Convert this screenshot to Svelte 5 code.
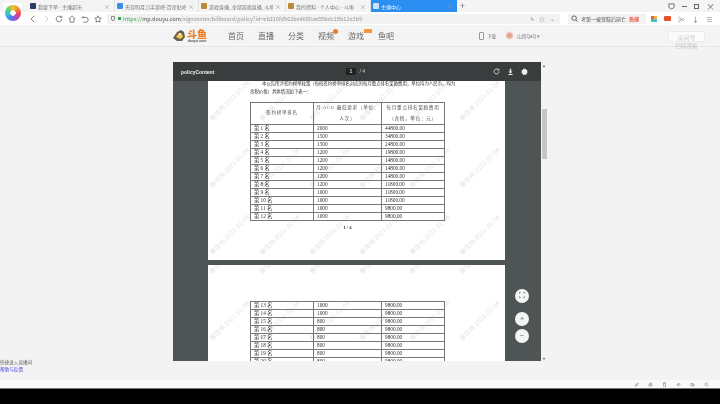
<script>
  const tabs = [
    { title: "我要下单 - 主播超市", color: "#2b3a67", width: 87 },
    { title: "天涯明月刀手游吧-百度贴吧--", color: "#3b8ee8", width: 84 },
    { title: "游戏直播_全部游戏直播_斗鱼区", color: "#b98a3a", width: 87 },
    { title: "我的资料 - 个人中心 - 斗鱼", color: "#b98a3a", width: 85 },
  ];
  const nav = [
    { label: "首页" },
    { label: "直播" },
    { label: "分类" },
    { label: "视频", badge: "dot" },
    { label: "游戏", badge: "tag" },
    { label: "鱼吧" },
  ];
  const firstRows = [
    [1, 2000, "44800.00"], [2, 1500, "34800.00"], [3, 1500, "24800.00"], [4, 1200, "19800.00"],
    [5, 1200, "14800.00"], [6, 1200, "14800.00"], [7, 1200, "14800.00"], [8, 1200, "11800.00"],
    [9, 1000, "11800.00"], [10, 1000, "11800.00"], [11, 1000, "9800.00"], [12, 1000, "9800.00"],
  ];
  const secondRows = [
    [13, 1000, "9800.00"], [14, 1000, "9800.00"], [15, 800, "9800.00"], [16, 800, "9800.00"],
    [17, 800, "9800.00"], [18, 800, "9800.00"], [19, 800, "9800.00"], [20, 800, "9800.00"],
  ];
  const marks = Array.from({ length: 18 });
  const statusIcons = [
    "M2 8l2-1 4-5 1 1-5 4-1 2zM2 4h2M6 8V6",
    "M2 4l3-2 3 1v5H2zM5 2v4H2",
    "M3 2h4v7H3zM2 2h6",
    "M2 4h2l2-2v6L4 6H2zM8 4v2",
    "M2 3h4v5H2zM6 4h2v4H6",
    "M4.5 2a2.7 2.7 0 1 1 0 5.4 2.7 2.7 0 0 1 0-5.4zM6.5 7 8.5 9",
  ];
</script>

<div class="screen">
  <div class="browser">
    <div class="logo-box"><div class="logo-ball"></div></div>
    <div class="chrome">
      <div class="tabbar">
        {#each tabs as tab}
          <div class="tab" style="width: {tab.width}px">
            <span class="favicon" style="background: {tab.color}"></span>
            <span class="tab-title">{tab.title}</span>
            <span class="tab-close">×</span>
          </div>
        {/each}
        <div class="tab active">
          <span class="favicon light"></span>
          <span class="tab-title">主播中心</span>
          <span class="tab-close">×</span>
        </div>
        <span class="plus">+</span>
        <div class="win-controls">
          <svg width="7" height="7" viewBox="0 0 8 8"><path d="M1 1h6v4l-3 2-3-2z" fill="none" stroke="#666" /></svg>
          <span class="win-min"></span>
          <span class="win-max"></span>
          <span class="win-x">×</span>
        </div>
      </div>
      <div class="toolbar">
        <svg class="tool" viewBox="0 0 10 10"><path d="M6.5 1 2.5 5l4 4" /></svg>
        <svg class="tool faint" viewBox="0 0 10 10"><path d="M3.5 1l4 4-4 4" /></svg>
        <svg class="tool" viewBox="0 0 10 10"><path d="M8.5 5a3.5 3.5 0 1 1-1-2.5M8.5 1v2h-2" /></svg>
        <svg class="tool" viewBox="0 0 10 10"><path d="M1 5l4-4 4 4M2.5 4v5h5V4" /></svg>
        <svg class="tool" viewBox="0 0 10 10"><path d="M3 1.5 1.5 3 3 4.5M1.5 3H6a2.7 2.7 0 0 1 0 6H3" /></svg>
        <svg class="tool" viewBox="0 0 10 10"><path d="M5 1l1.2 2.6L9 4 7 6l.5 3L5 7.6 2.5 9 3 6 1 4l2.8-.4z" /></svg>
        <div class="urlbar">
          <span class="shield"></span>
          <span class="lock"></span>
          <span class="url"><span class="https">https://</span><span class="host">mp.douyu.com</span>/signcenter/billboard/policy?id=eb216fd962be4680ae88bdc18b12e3b9</span>
          <span class="url-icons">
            <span class="bolt">ϟ</span>
            <span class="star">☆</span>
            <span class="chev">⌄</span>
          </span>
        </div>
        <div class="searchbar">
          <svg width="7" height="7" viewBox="0 0 10 10"><circle cx="4.5" cy="4.5" r="3.2" fill="none" stroke="#555" stroke-width="1.3" /><path d="M7 7l2.4 2.4" stroke="#555" stroke-width="1.3" /></svg>
          <span class="search-text">考第一被贤糕后崩亡</span>
          <span class="hot">热搜</span>
        </div>
        <div class="ext">
          <span class="ext-grid"></span>
          <span class="ext-red"></span>
          <span class="ext-glyph">✂</span>
          <span class="ext-glyph">↓</span>
          <span class="ext-glyph">≡</span>
        </div>
      </div>

      <header class="site-header">
        <div class="brand">
          <svg width="15" height="14" viewBox="0 0 15 14">
            <path d="M1 9 5 3l4-2 3 2 1 5-3 4H5z" fill="#6a6045" />
            <path d="M4 8l3-4 3 1 1 3-3 2z" fill="#f2c75c" />
            <circle cx="8" cy="5" r="1" fill="#fff" />
          </svg>
          <div class="brand-text">
            <span class="brand-name">斗鱼</span>
            <span class="brand-url">douyu.com</span>
          </div>
        </div>
        <nav class="site-nav">
          {#each nav as item}
            <span class="nav-item">
              {item.label}
              {#if item.badge === "dot"}<i class="nav-dot"></i>{/if}
              {#if item.badge === "tag"}<i class="nav-tag"></i>{/if}
            </span>
          {/each}
        </nav>
        <div class="site-user">
          <span class="phone"></span>
          <span class="user-label">下载</span>
          <span class="avatar"></span>
          <span class="user-label">山哥QaQ ▾</span>
        </div>
        <div class="room-box">
          <span class="room-btn">房间号</span>
          <span class="room-note">扫码观看</span>
        </div>
      </header>

      <div class="content">
        <div class="viewer-row">
          <section class="viewer">
            <div class="viewer-head">
              <span class="doc-name">policyContent</span>
              <span class="pager"><b>1</b> / 4</span>
              <span class="head-icons">
                <svg width="7" height="7" viewBox="0 0 10 10"><path d="M8.5 5a3.5 3.5 0 1 1-1-2.5M8.5 1v2h-2" fill="none" stroke="#ddd" stroke-width="1.3" /></svg>
                <svg width="7" height="7" viewBox="0 0 10 10"><path d="M4 1h2v4h2L5 8 2 5h2zM2 8.5h6V10H2z" fill="#eee" /></svg>
                <svg width="7" height="7" viewBox="0 0 10 10"><path d="M3 1h4v2h2v5H7.5V9.5h-5V8H1V3h2z" fill="#eee" /></svg>
              </span>
            </div>
            <div class="viewer-body">
              <div class="page first">
                <div class="marks first-marks">
                  {#each marks as _}<span class="mark">秦佳伟 2021-01-04</span>{/each}
                </div>
                <p class="intro indent">本公告所涉签约榜单政策（每档签约榜单排名对应的每月重点排名奖励费用，单位均为人民币，均为</p>
                <p class="intro">含税价格）具体情况如下表一：</p>
                <table>
                  <colgroup><col class="c1" /><col class="c2" /><col class="c3" /></colgroup>
                  <thead>
                    <tr>
                      <th>签约榜单排名</th>
                      <th>月 ACU 最低要求（单位：<br />人次）</th>
                      <th>每月重点排名奖励费用<br />（含税，单位：元）</th>
                    </tr>
                  </thead>
                  <tbody>
                    {#each firstRows as row}
                      <tr><td>第 {row[0]} 名</td><td>{row[1]}</td><td>{row[2]}</td></tr>
                    {/each}
                  </tbody>
                </table>
                <div class="page-no">1 / 4</div>
              </div>
              <div class="page second">
                <div class="marks second-marks">
                  {#each marks as _}<span class="mark">秦佳伟 2021-01-04</span>{/each}
                </div>
                <table>
                  <colgroup><col class="c1" /><col class="c2" /><col class="c3" /></colgroup>
                  <tbody>
                    {#each secondRows as row}
                      <tr><td>第 {row[0]} 名</td><td>{row[1]}</td><td>{row[2]}</td></tr>
                    {/each}
                  </tbody>
                </table>
              </div>
            </div>
            <div class="float-btns">
              <button class="round fit" aria-label="fit">
                <svg width="6" height="6" viewBox="0 0 6 6"><path d="M0 2V0h2M4 0h2v2M6 4v2H4M2 6H0V4" fill="none" stroke="#777" /></svg>
              </button>
              <button class="round">+</button>
              <button class="round">−</button>
            </div>
          </section>
          <div class="scrollbar">
            <span class="arrow">▴</span>
            <span class="thumb"></span>
            <span class="arrow down">▾</span>
          </div>
        </div>
        <div class="foot-links">
          <span>快捷进入直播间</span>
          <a href="#help">帮助与反馈</a>
        </div>
      </div>

      <div class="statusbar">
        {#each statusIcons as d}
          <svg width="5" height="5" viewBox="0 0 10 10"><path {d} fill="none" stroke="#888" stroke-width="1.2" /></svg>
        {/each}
      </div>
    </div>
  </div>
  <div class="taskbar"></div>
</div>

<style>
  :global(body) {
    margin: 0;
    background: #000;
  }

  .screen {
    width: 720px;
    height: 404px;
    display: flex;
    flex-direction: column;
    overflow: hidden;
    font-family: "Noto Sans CJK SC", "Liberation Sans", sans-serif;
    filter: blur(0.5px);
  }

  .browser {
    position: relative;
    height: 388px;
    background: #f3f3f3;
    border-bottom: 1px solid #777;
  }

  .chrome {
    display: flex;
    flex-direction: column;
    height: 100%;
  }

  .taskbar {
    flex: 1;
    background: #000;
  }

  .logo-box {
    position: absolute;
    left: 4px;
    top: 3px;
    width: 18px;
    height: 19px;
    background: #fff;
    display: flex;
    align-items: center;
    justify-content: center;
    z-index: 2;
  }

  .logo-ball {
    width: 16px;
    height: 16px;
    border-radius: 50%;
    background:
      radial-gradient(circle at 50% 50%, #fff 0 2.5px, transparent 3px),
      conic-gradient(#f6c12d, #f08a2c, #e8416f, #9b4fd0, #4c7df0, #32c0e0, #5ed06a, #f6c12d);
  }

  /* tabs */
  .tabbar {
    height: 12px;
    display: flex;
    align-items: stretch;
    padding-left: 28px;
    background: #f4f4f4;
    font-size: 5px;
    color: #777;
  }

  .tab {
    display: flex;
    align-items: center;
    gap: 2px;
    padding: 0 4px 0 2px;
    box-sizing: border-box;
    border-right: 1px solid #e2e2e2;
  }

  .tab.active {
    width: 86px;
    background: #2b8ef3;
    color: #e8f2ff;
    border: none;
  }

  .favicon {
    width: 6px;
    height: 6px;
    flex: none;
    border-radius: 1px;
  }

  .favicon.light {
    background: #cfe2f7;
  }

  .tab-title {
    flex: 1;
    white-space: nowrap;
    overflow: hidden;
  }

  .tab-close {
    color: #999;
    font-size: 6px;
  }

  .plus {
    margin-left: 3px;
    font-size: 9px;
    line-height: 11px;
    color: #777;
  }

  .win-controls {
    margin-left: auto;
    padding-right: 5px;
    display: flex;
    align-items: center;
    gap: 7px;
  }

  .win-min {
    width: 5px;
    height: 1px;
    background: #666;
  }

  .win-max {
    width: 5px;
    height: 5px;
    border: 1px solid #666;
    box-sizing: border-box;
  }

  .win-x {
    font-size: 9px;
    line-height: 9px;
    color: #666;
  }

  /* address row */
  .toolbar {
    height: 13px;
    padding: 1px 0 1px 29px;
    background: #fff;
    display: flex;
    align-items: center;
    box-sizing: border-box;
  }

  .tool {
    width: 8px;
    height: 8px;
    margin-right: 5px;
    fill: none;
    stroke: #555;
    stroke-width: 0.9;
    flex: none;
  }

  .tool.faint {
    stroke: #bbb;
  }

  .urlbar {
    width: 453px;
    height: 10px;
    background: #f2f2f2;
    display: flex;
    align-items: center;
    padding-left: 4px;
    gap: 2px;
    box-sizing: border-box;
    font-size: 5.5px;
    color: #999;
    white-space: nowrap;
  }

  .shield {
    width: 4px;
    height: 5px;
    border: 1px solid #888;
    box-sizing: border-box;
    border-radius: 0 0 2px 2px;
    margin-right: 1px;
  }

  .lock {
    width: 3px;
    height: 3px;
    background: #2ca84a;
  }

  .https {
    color: #3aae55;
  }

  .host {
    color: #555;
  }

  .url-icons {
    margin-left: auto;
    padding-right: 5px;
    display: flex;
    gap: 5px;
    align-items: center;
    color: #888;
    font-size: 6px;
  }

  .searchbar {
    width: 78px;
    height: 10px;
    margin-left: 8px;
    background: #f2f2f2;
    display: flex;
    align-items: center;
    gap: 3px;
    padding-left: 3px;
    box-sizing: border-box;
    font-size: 5px;
    color: #555;
    white-space: nowrap;
  }

  .hot {
    color: #e8503a;
    font-weight: 700;
  }

  .ext {
    margin-left: 5px;
    display: flex;
    align-items: center;
    gap: 7px;
    color: #777;
    font-size: 7px;
    line-height: 8px;
  }

  .ext-grid {
    width: 6px;
    height: 6px;
    background: conic-gradient(#f2b632 25%, #4fb7e8 0 50%, #5ac46e 0 75%, #e85d5d 0);
  }

  .ext-red {
    width: 7px;
    height: 5px;
    background: #e5532d;
    border-radius: 1px;
  }

  /* douyu header */
  .site-header {
    position: relative;
    height: 21px;
    background: #f4f4f4;
    border-bottom: 1px solid #e6e6e6;
    display: flex;
    align-items: center;
    padding-left: 172px;
  }

  .brand {
    display: flex;
    align-items: center;
    width: 56px;
    flex: none;
  }

  .brand-text {
    display: flex;
    flex-direction: column;
    align-items: center;
  }

  .brand-name {
    color: #ee7b22;
    font-size: 10px;
    line-height: 10px;
    font-weight: 900;
  }

  .brand-url {
    font: 700 3.5px/4px "Liberation Sans", sans-serif;
    color: #555;
  }

  .site-nav {
    display: flex;
    gap: 10px;
    font-size: 8px;
    color: #666;
    flex: none;
  }

  .nav-item {
    position: relative;
    width: 20px;
    line-height: 12px;
    white-space: nowrap;
  }

  .nav-dot {
    position: absolute;
    right: 0;
    top: -1px;
    width: 5px;
    height: 5px;
    border-radius: 50%;
    background: #ee7b22;
  }

  .nav-tag {
    position: absolute;
    right: -4px;
    top: -1px;
    width: 8px;
    height: 4px;
    background: #f39a3c;
  }

  .site-user {
    margin-left: 81px;
    display: flex;
    align-items: center;
    gap: 3px;
    font-size: 4.6px;
    color: #777;
    white-space: nowrap;
  }

  .phone {
    width: 5px;
    height: 8px;
    box-sizing: border-box;
    border: 1px solid #999;
    border-radius: 1px;
  }

  .avatar {
    width: 9px;
    height: 9px;
    margin-left: 6px;
    border-radius: 50%;
    background: radial-gradient(circle, #e0a48c 0 30%, #f4f4f4 70%);
  }

  .room-box {
    position: absolute;
    left: 668px;
    top: 6px;
    display: flex;
    flex-direction: column;
    align-items: center;
    gap: 1px;
    font-size: 6px;
    color: #d0d0d0;
  }

  .room-btn {
    width: 37px;
    height: 11px;
    line-height: 11px;
    text-align: center;
    background: #fbfbfb;
    border: 1px solid #ededed;
    box-sizing: border-box;
    border-radius: 2px;
  }

  .room-note {
    line-height: 7px;
    color: #c8c8c8;
    font-size: 5.6px;
  }

  /* pdf viewer */
  .content {
    flex: 1;
    min-height: 0;
    display: flex;
    flex-direction: column;
    background: #f3f3f3;
  }

  .viewer-row {
    height: 299px;
    margin-top: 15px;
    padding-left: 173px;
    display: flex;
  }

  .viewer {
    position: relative;
    width: 368px;
    height: 100%;
    background: #4f5454;
    display: flex;
    flex-direction: column;
    overflow: hidden;
  }

  .viewer-head {
    height: 19px;
    flex: none;
    background: #393d3e;
    color: #eee;
    display: flex;
    align-items: center;
    padding: 0 13px 0 8px;
    font: 700 5px "Liberation Sans", sans-serif;
  }

  .doc-name {
    width: 165px;
  }

  .pager {
    font-weight: 400;
    color: #ccc;
  }

  .pager b {
    display: inline-block;
    width: 10px;
    line-height: 7px;
    margin-right: 2px;
    text-align: center;
    background: #1e2122;
    color: #ddd;
  }

  .head-icons {
    margin-left: auto;
    display: flex;
    gap: 7px;
  }

  .viewer-body {
    flex: 1;
    min-height: 0;
    display: flex;
    flex-direction: column;
    align-items: center;
    gap: 5px;
    margin-right: 1px;
    overflow: hidden;
  }

  .page {
    position: relative;
    width: 297px;
    flex: none;
    background: #fff;
    box-sizing: border-box;
    overflow: hidden;
    padding: 0 0 0 42px;
    color: #333;
  }

  .page.first {
    height: 179px;
  }

  .page.second {
    height: 120px;
    padding-top: 36px;
  }

  .marks {
    position: absolute;
    left: -3px;
    display: grid;
    grid-template-columns: repeat(6, 50px);
    grid-auto-rows: 67px;
    justify-items: center;
    align-items: center;
    pointer-events: none;
  }

  .first-marks {
    top: -14px;
  }

  .second-marks {
    top: -45px;
  }

  .mark {
    font-size: 6.4px;
    line-height: 8px;
    color: #e4e4e4;
    white-space: nowrap;
    transform: rotate(-45deg);
  }

  .intro {
    position: relative;
    margin: 0 0 0 -42px;
    padding-left: 42px;
    font-size: 4.4px;
    line-height: 8px;
    white-space: nowrap;
  }

  .indent {
    margin-top: -2px;
    text-indent: 12px;
  }

  table {
    position: relative;
    width: 195px;
    margin-top: 7px;
    border-collapse: collapse;
    table-layout: fixed;
    font: 5.3px "Liberation Serif", "Noto Sans CJK SC", serif;
    color: #333;
  }

  .c1 {
    width: 63px;
  }

  .c2 {
    width: 68px;
  }

  th,
  td {
    border: 1px solid #777;
    padding: 0 0 0 3px;
    height: 7px;
    line-height: 7px;
    text-align: left;
    white-space: nowrap;
    font-weight: 400;
  }

  th {
    height: 21px;
    line-height: 10.5px;
    text-align: center;
    padding: 0;
    font-size: 4.6px;
    letter-spacing: 0.7px;
    color: #555;
  }

  .second table {
    margin-top: 0;
  }

  .page-no {
    position: relative;
    width: 195px;
    margin-top: 4px;
    text-align: center;
    font: 700 4.5px "Liberation Serif", serif;
  }

  .float-btns {
    position: absolute;
    right: 12px;
    top: 227px;
    display: flex;
    flex-direction: column;
    gap: 3px;
  }

  .round {
    width: 14px;
    height: 14px;
    padding: 0;
    border: none;
    border-radius: 50%;
    background: #f4f4f4;
    color: #777;
    font: 8px/14px "Liberation Sans", sans-serif;
  }

  .fit {
    margin-bottom: 6px;
  }

  .scrollbar {
    width: 6px;
    display: flex;
    flex-direction: column;
    align-items: center;
    font-size: 4px;
    line-height: 6px;
    color: #444;
  }

  .thumb {
    width: 5px;
    height: 50px;
    margin-top: 41px;
    background: #c6c6c6;
  }

  .arrow.down {
    margin-top: auto;
  }

  .foot-links {
    display: flex;
    flex-direction: column;
    margin-top: -2px;
    font-size: 4.6px;
    line-height: 7px;
    color: #666;
  }

  .foot-links a {
    color: #3a3ae0;
    text-decoration: none;
  }

  .statusbar {
    height: 8px;
    flex: none;
    background: #fafafa;
    display: flex;
    justify-content: flex-end;
    align-items: center;
    gap: 9px;
    padding-right: 11px;
  }
</style>
